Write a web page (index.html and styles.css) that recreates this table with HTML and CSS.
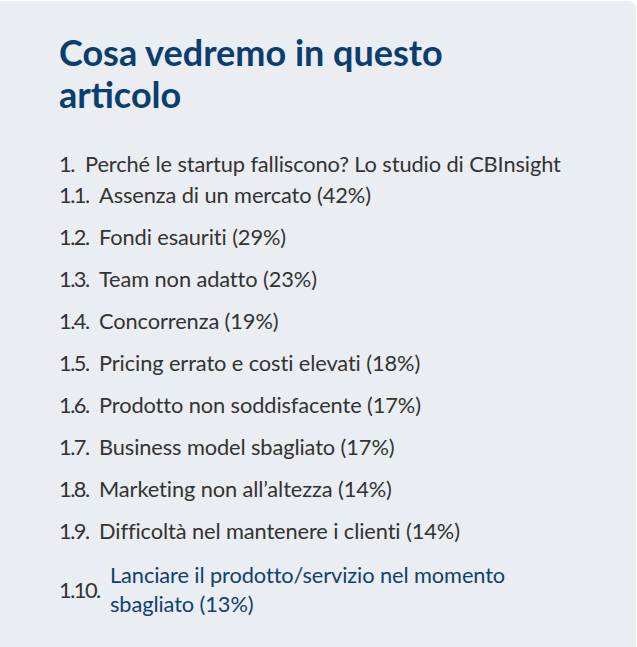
FILE: index.html
```html
<!DOCTYPE html>
<html lang="it">
<head>
<meta charset="utf-8">
<title>Cosa vedremo in questo articolo</title>
<link rel="stylesheet" href="styles.css">
</head>
<body>
<div class="toc">
  <h2 class="toc-title">Cosa vedremo in questo articolo</h2>
  <ol class="toc-list">
    <li class="toc-main"><span class="num num-main">1.</span><span class="txt">Perché le startup falliscono? Lo studio di CBInsight</span></li>
    <li class="toc-sub first"><span class="num">1.1.</span><span class="txt">Assenza di un mercato (42%)</span></li>
    <li class="toc-sub"><span class="num">1.2.</span><span class="txt">Fondi esauriti (29%)</span></li>
    <li class="toc-sub"><span class="num">1.3.</span><span class="txt">Team non adatto (23%)</span></li>
    <li class="toc-sub"><span class="num">1.4.</span><span class="txt">Concorrenza (19%)</span></li>
    <li class="toc-sub"><span class="num">1.5.</span><span class="txt">Pricing errato e costi elevati (18%)</span></li>
    <li class="toc-sub"><span class="num">1.6.</span><span class="txt">Prodotto non soddisfacente (17%)</span></li>
    <li class="toc-sub"><span class="num">1.7.</span><span class="txt">Business model sbagliato (17%)</span></li>
    <li class="toc-sub"><span class="num">1.8.</span><span class="txt">Marketing non all’altezza (14%)</span></li>
    <li class="toc-sub"><span class="num">1.9.</span><span class="txt">Difficoltà nel mantenere i clienti (14%)</span></li>
    <li class="toc-sub last"><span class="num num-wide">1.10.</span><span class="txt link">Lanciare il prodotto/servizio nel momento sbagliato (13%)</span></li>
  </ol>
</div>
</body>
</html>
```

FILE: styles.css
```css
html, body {
  margin: 0;
  padding: 0;
  background: #ffffff;
}

body {
  padding-top: 1px;
}

.toc {
  width: 636px;
  min-height: 660px;
  box-sizing: border-box;
  background: #eaedf1;
  border-radius: 0 8px 0 0;
  padding: 30px 20px 20px 59px;
  font-family: Lato, "Open Sans", sans-serif;
}

.toc-title {
  margin: 0;
  width: 440px;
  font-size: 36px;
  line-height: 42px;
  font-weight: 700;
  color: #0b3d6e;
}

.toc-list {
  list-style: none;
  margin: 34px 0 0 0;
  padding: 0;
  font-size: 21.8px;
  line-height: 29px;
  color: #333333;
}

.toc-list li {
  display: flex;
  align-items: center;
}

.toc-sub {
  margin-top: 13px;
}

.toc-sub.first {
  margin-top: 2px;
}

.toc-sub.last {
  margin-top: 15px;
}

.num {
  flex: none;
  width: 40px;
  letter-spacing: -1.5px;
  white-space: nowrap;
}

.num-main {
  width: 26px;
}

.num-wide {
  width: 51px;
}

.txt {
  flex: 0 1 auto;
  max-width: 460px;
  letter-spacing: -0.1px;
}

.toc-main .txt {
  max-width: none;
}

.link {
  color: #10416f;
}
```
